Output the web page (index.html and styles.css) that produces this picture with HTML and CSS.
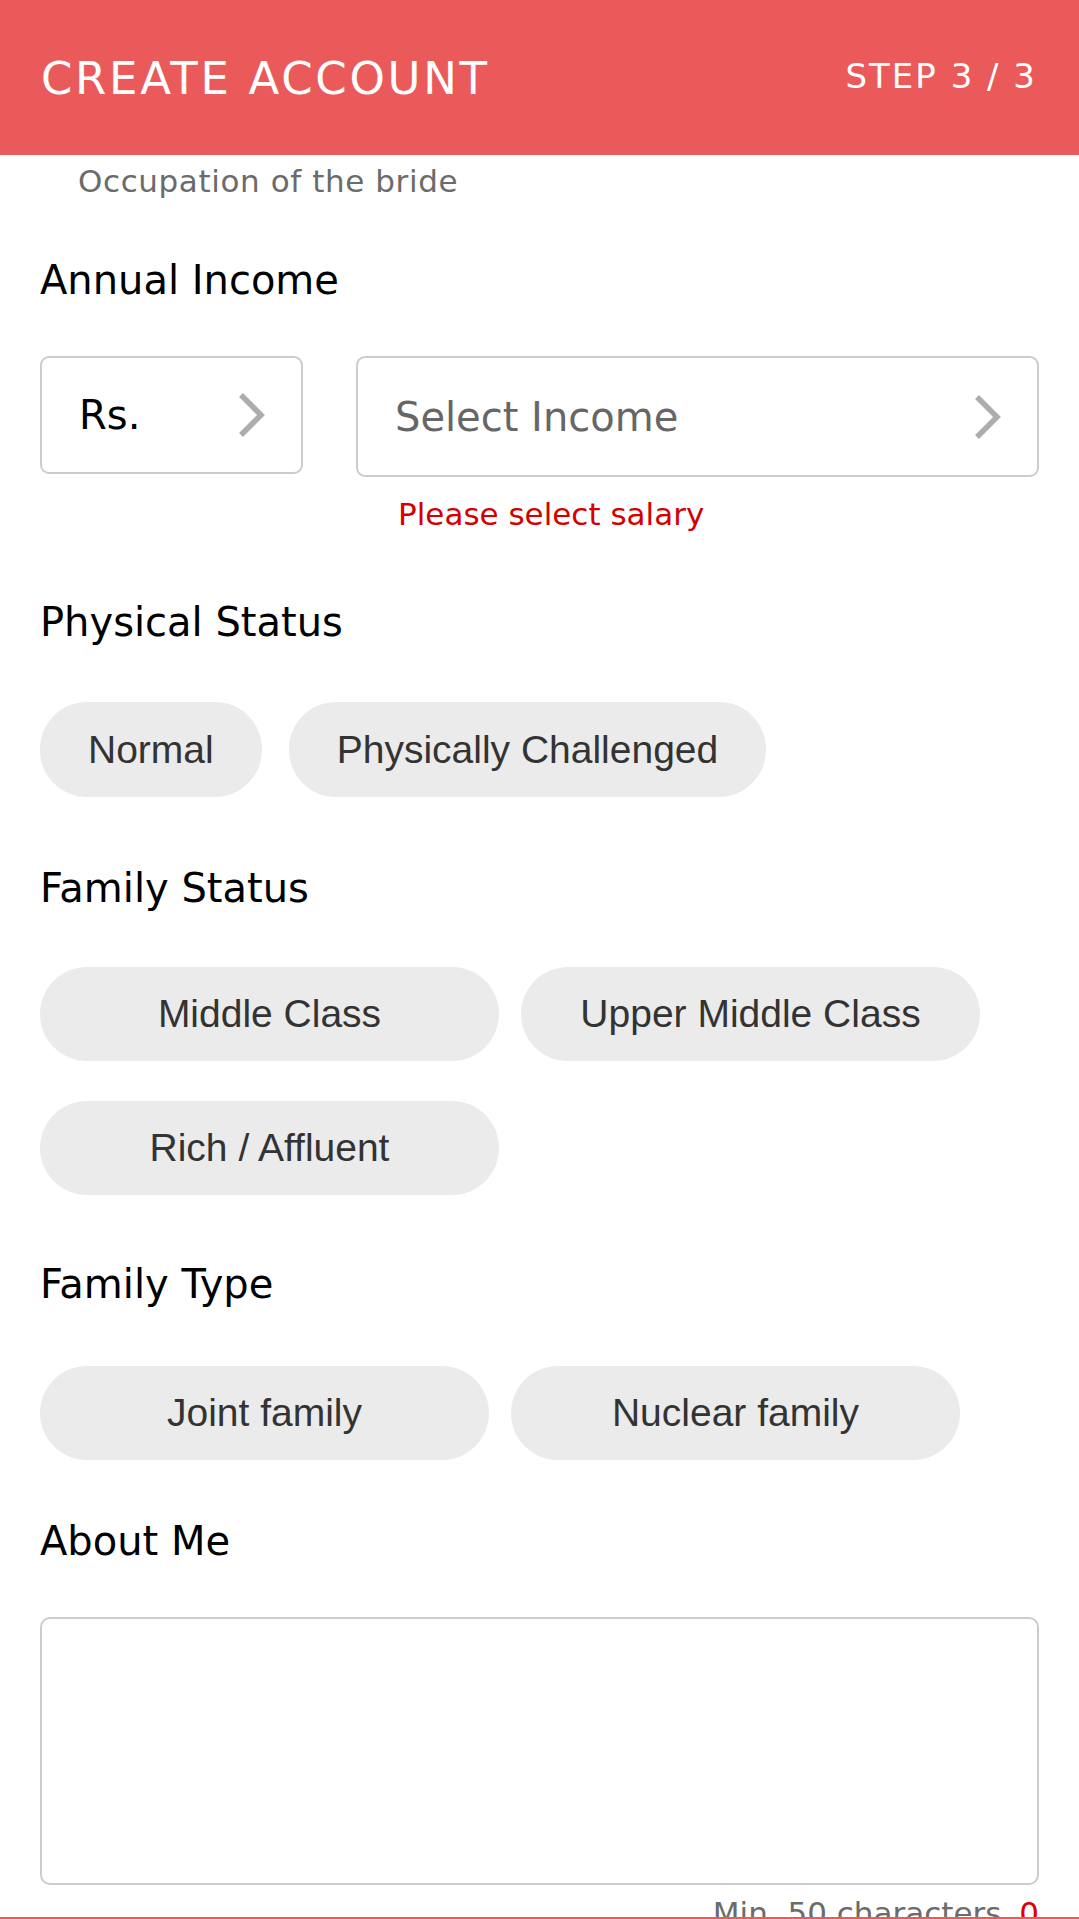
FILE: index.html
```html
<!DOCTYPE html>
<html lang="en">
<head>
<meta charset="utf-8">
<title>Create Account - Step 3</title>
<link rel="stylesheet" href="styles.css">
</head>
<body>
<header class="topbar">
  <h1 class="topbar-title">CREATE ACCOUNT</h1>
  <div class="topbar-step">STEP 3 / 3</div>
</header>

<main class="form">
  <p class="hint">Occupation of the bride</p>

  <h2 class="label label-first">Annual Income</h2>
  <div class="income">
    <div class="select select-currency">
      <span class="select-value">Rs.</span>
      <svg class="chevron" width="27" height="46" viewBox="0 0 27 46"><polyline points="3,3 23,23 3,43" fill="none" stroke="#adadad" stroke-width="5.5" stroke-linejoin="miter"/></svg>
    </div>
    <div class="select select-income">
      <span class="select-placeholder">Select Income</span>
      <svg class="chevron" width="27" height="46" viewBox="0 0 27 46"><polyline points="3,3 23,23 3,43" fill="none" stroke="#adadad" stroke-width="5.5" stroke-linejoin="miter"/></svg>
    </div>
    <p class="error">Please select salary</p>
  </div>

  <h2 class="label label-after-error">Physical Status</h2>
  <div class="chips chips-physical">
    <span class="chip">Normal</span>
    <span class="chip">Physically Challenged</span>
  </div>

  <h2 class="label">Family Status</h2>
  <div class="chips chips-status">
    <span class="chip">Middle Class</span>
    <span class="chip">Upper Middle Class</span>
    <span class="chip">Rich / Affluent</span>
  </div>

  <h2 class="label label-type">Family Type</h2>
  <div class="chips chips-type">
    <span class="chip">Joint family</span>
    <span class="chip">Nuclear family</span>
  </div>

  <h2 class="label label-about">About Me</h2>
  <div class="textarea"></div>
  <div class="counter">Min. 50 characters <span class="counter-num">0</span></div>
</main>

<div class="bottom-line"></div>
</body>
</html>
```

FILE: styles.css
```css
* { box-sizing: border-box; }

html, body {
  margin: 0;
  padding: 0;
  background: #ffffff;
}

body {
  font-family: "DejaVu Sans", "Open Sans", sans-serif;
  color: #000;
}

.topbar {
  height: 155px;
  background: #ea5a5a;
  display: flex;
  justify-content: space-between;
  align-items: flex-start;
  padding: 52px 44px 0 41px;
  color: #fff;
}

.topbar-title {
  margin: 0;
  font-weight: normal;
  font-size: 45px;
  line-height: 54px;
  letter-spacing: 2.7px;
}

.topbar-step {
  font-size: 34px;
  line-height: 48px;
  letter-spacing: 2px;
  margin-right: -2px;
}

.form {
  padding: 0 40px;
}

.hint {
  margin: 6px 0 0 38px;
  font-size: 31px;
  line-height: 40px;
  letter-spacing: 0.6px;
  color: #6b6b6b;
}

.label {
  margin: 67px 0 0 0;
  font-weight: normal;
  font-size: 40px;
  line-height: 48px;
  color: #000;
}

.label-first { margin-top: 55px; }
.label-after-error { margin-top: 64px; }
.label-type { margin-top: 65px; }
.label-about { margin-top: 57px; }

.income {
  margin-top: 52px;
  display: grid;
  grid-template-columns: 263px 1fr;
  column-gap: 53px;
  align-items: start;
}

.select {
  border: 2px solid #cccccc;
  border-radius: 9px;
  display: flex;
  align-items: center;
  justify-content: space-between;
  padding: 0 36px 0 37px;
  font-size: 40px;
}

.select-currency { height: 118px; }
.select-income { height: 121px; }

.select-value { color: #000; }
.select-placeholder { color: #666; }

.chevron { display: block; flex: none; }

.error {
  grid-column: 2;
  margin: 17px 0 0 0;
  padding-left: 42px;
  font-size: 31px;
  line-height: 40px;
  color: #d40000;
}

.chips {
  margin-top: 56px;
  display: flex;
  flex-wrap: wrap;
  column-gap: 22px;
  row-gap: 40px;
}

.chip {
  height: 94px;
  border-radius: 47px;
  background: #ebebeb;
  color: #333;
  font-family: "Liberation Sans", Arial, sans-serif;
  font-size: 39px;
  display: flex;
  align-items: center;
  justify-content: center;
}

.chips-physical { column-gap: 27px; }
.chips-physical .chip { padding: 0 48px; height: 95px; }

.chips-status { margin-top: 55px; }
.chips-status .chip { width: 459px; }

.chips-type { margin-top: 58px; }
.chips-type .chip { width: 449px; }

.textarea {
  margin-top: 52px;
  height: 268px;
  border: 2px solid #cccccc;
  border-radius: 10px;
}

.counter {
  margin-top: 8px;
  text-align: right;
  font-size: 31px;
  line-height: 40px;
  color: #6b6b6b;
}

.counter-num {
  color: #e00000;
  margin-left: 8px;
}

.bottom-line {
  position: fixed;
  left: 0;
  right: 0;
  bottom: 0;
  height: 2px;
  background: #ea5a5a;
}
```
